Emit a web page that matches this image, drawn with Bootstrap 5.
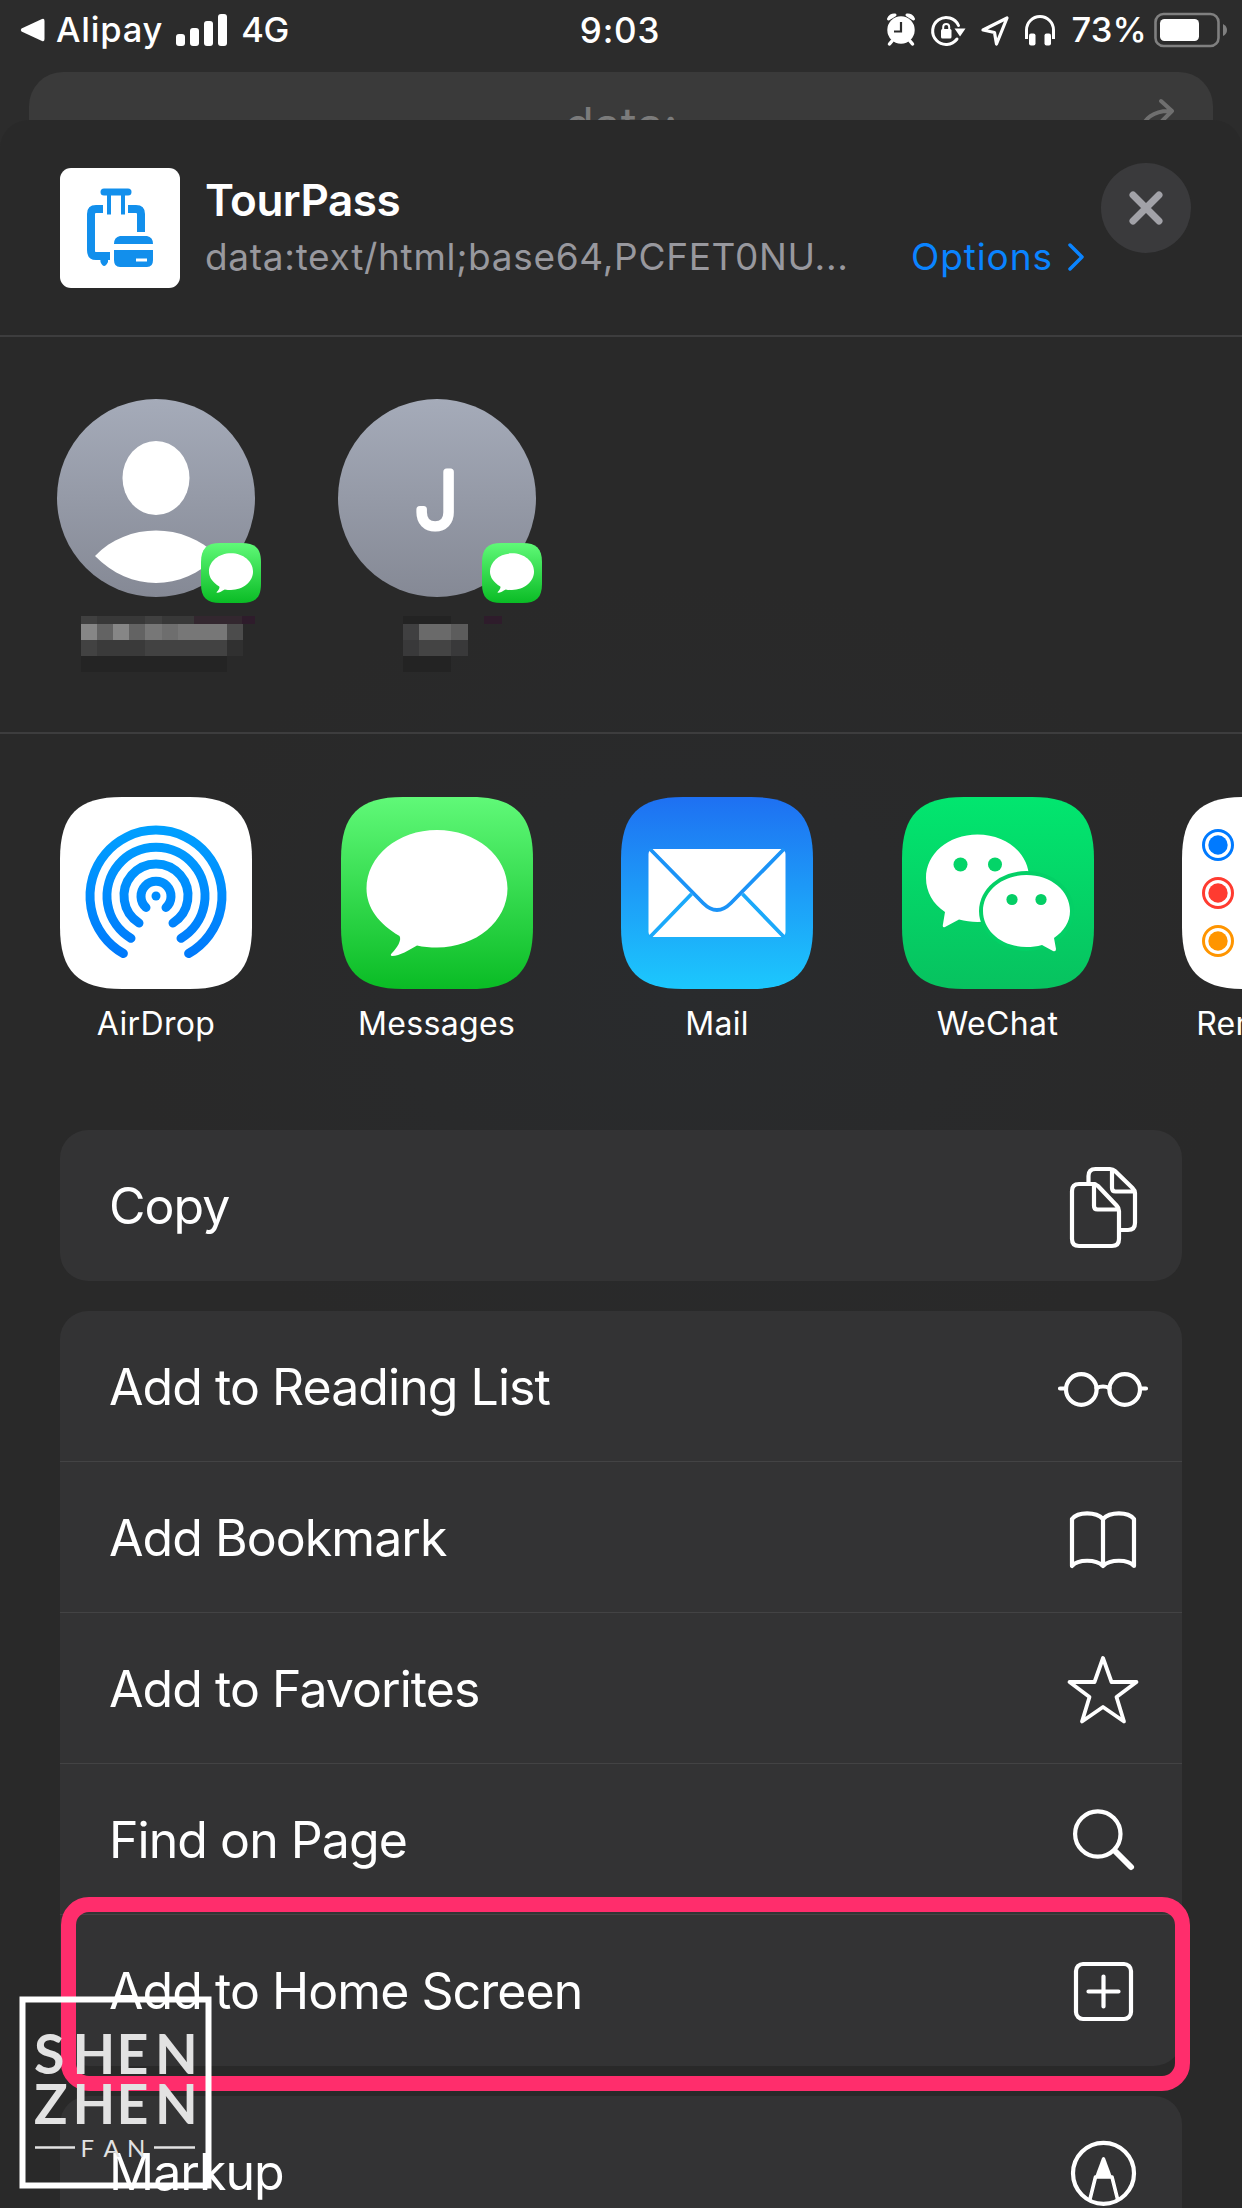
<!DOCTYPE html>
<html lang="en">
<head>
<meta charset="utf-8">
<meta name="viewport" content="width=device-width, initial-scale=1">
<title>Share sheet</title>
<link href="https://cdn.jsdelivr.net/npm/bootstrap@5.3.0/dist/css/bootstrap.min.css" rel="stylesheet">
<style>
html,body{height:2208px;overflow:hidden}
body{width:1242px;background:#2c2c2c;color:#fff;font-family:Inter,"Liberation Sans",sans-serif;position:relative}
svg{display:block;flex:none}
.statusbar{height:72px;font-size:34.5px;line-height:60px;font-weight:450;padding:0 14px 13px 20px}
.statusbar>div{flex:1 1 0}
.clock{font-size:35px;letter-spacing:.8px;margin-left:-4px;margin-right:4px}
.carrier{letter-spacing:.8px;margin-left:11px}
.bars{margin-left:13px}
.fourg{margin-left:13px;letter-spacing:-.4px}
.pct{margin-left:11px;letter-spacing:.2px}
.batt{margin-left:7px}
.behind{margin:0 29px;height:48px;background:#3a3a3a;border-radius:34px 34px 0 0;overflow:hidden}
.behind .addr{font-size:48px;line-height:58px;color:#7b7b7b;padding-top:24px}
.sheet{height:2088px;background:radial-gradient(ellipse 560px 420px at 680px 880px,#292b2d,#292929);border-radius:28px 28px 0 0;overflow:hidden}
.head{height:217px;padding:48px 51px 0 60px;border-bottom:2px solid #3d3d3e}
.favicon{width:120px;height:120px;background:#fff;border-radius:11px}
.titles{margin-left:25px;padding-top:4px}
.site{font-size:44px;line-height:56px;font-weight:600;letter-spacing:-.5px}
.addrline{font-size:37px;line-height:58px;color:#98989e}
.url{width:706px;letter-spacing:.7px}
.opt{color:#0a84ff}
.optname{letter-spacing:.9px}
.chev{margin-left:14px}
.closebtn{width:90px;height:90px;background:#3a3a3c;margin-top:-5px}
.people{height:397px;padding:62px 57px 0;gap:83px;border-bottom:2px solid #3d3d3e}
.avatar{width:198px;height:198px;border-radius:50%;background:linear-gradient(#a5abb9,#858995);position:relative}
.avatar .mini{position:absolute;left:144px;top:144px}
.apps{height:396px;padding:63px 0 0 15.8px}
.app{width:280.5px;flex:none}
.appname{font-size:32px;line-height:40px;margin-top:15px;letter-spacing:.35px}
.group{margin:0 60px 30px;background:#333334;border-radius:28px;overflow:hidden}
.entry{height:151px;padding:0 31px 0 49px;font-size:50px;letter-spacing:-.95px;border-bottom:1.5px solid #434344}
.entry>span{padding-top:2px}
.entry:last-child{border-bottom:0}
.ico{fill:none;stroke:#fff;stroke-width:4.2;stroke-linecap:round;stroke-linejoin:round}
.highlight{position:absolute;left:61px;top:1897px;width:1129px;height:194px;border:15px solid #ff2d6c;border-radius:28px}
.stamp{position:absolute;left:19px;top:1996px}
</style>
</head>
<body>
<svg width="0" height="0" class="position-absolute">
  <defs>
    <linearGradient id="green" x1="0" y1="0" x2="0" y2="1"><stop offset="0" stop-color="#60f978"/><stop offset="1" stop-color="#0abc25"/></linearGradient>
    <linearGradient id="blue" x1="0" y1="0" x2="0" y2="1"><stop offset="0" stop-color="#1e70f2"/><stop offset="1" stop-color="#1cc8fd"/></linearGradient>
    <linearGradient id="wx" x1="0" y1="0" x2="0" y2="1"><stop offset="0" stop-color="#02e66f"/><stop offset="1" stop-color="#07c25f"/></linearGradient>
    <linearGradient id="drop" gradientUnits="userSpaceOnUse" x1="0" y1="28" x2="0" y2="162"><stop offset="0" stop-color="#00a0ff"/><stop offset="1" stop-color="#0078fb"/></linearGradient>
    <path id="tile" d="M62 0H130C174 0 192 18 192 62V130C192 174 174 192 130 192H62C18 192 0 174 0 130V62C0 18 18 0 62 0Z"/>
    <g id="msg"><use href="#tile" fill="url(#green)"/><path fill="#fff" d="M96 33C135 33 166.500 59 166.500 91.500C166.500 124 135 150.500 96 150.500C89 150.500 82 150 76 148.500C68 153 59 159 51 159C49 158.500 50 157 51 156C56 151 61 143 58.500 139C38 127 25.500 111 25.500 91.500C25.500 59 57 33 96 33Z"/></g>
  </defs>
</svg>

<div class="statusbar d-flex align-items-center">
  <div class="d-flex align-items-center">
    <svg width="25" height="26" viewBox="0 0 25 26"><path fill="#fff" d="M22 2Q24.500 1 24.500 4V22Q24.500 25 22 24L1.500 14.500Q0 13 1.500 11.500Z"/></svg>
    <span class="carrier">Alipay</span>
    <svg class="bars" width="52" height="34" viewBox="0 0 52 34" fill="#fff"><rect x="0" y="21" width="9" height="12" rx="3"/><rect x="14" y="15" width="9" height="18" rx="3"/><rect x="28" y="8" width="9" height="25" rx="3"/><rect x="42" y="1" width="9" height="32" rx="3"/></svg>
    <span class="fourg">4G</span>
  </div>
  <div class="clock text-center">9:03</div>
  <div class="d-flex align-items-center justify-content-end">
    <svg width="176" height="40" viewBox="0 0 176 40" fill="none" stroke="#fff">
      <g fill="#fff" stroke="none"><circle cx="17" cy="20" r="13.700"/><path d="M4.500 9A6 6 0 0 1 11 5ZM29.500 9A6 6 0 0 0 23 5Z" stroke="#fff" stroke-width="3" stroke-linejoin="round"/></g><path stroke-width="3.500" stroke-linecap="round" d="M8 31L5.500 34M26 31L28.500 34"/><path stroke="#2c2c2c" stroke-width="2.200" d="M17 12V21.500H10"/>
      <path stroke-width="3" stroke-linecap="round" d="M74.500 15.500A13.500 13.500 0 1 0 73 29"/><path fill="#fff" stroke="none" d="M70.500 18.500H81.500L76 26.500Z"/><rect x="57" y="19" width="10.500" height="9.500" rx="1.500" fill="#fff" stroke="none"/><path stroke-width="2" d="M59.200 20V17A3 3 0 0 1 65.200 17V20"/>
      <path stroke-width="3.200" stroke-linejoin="round" d="M99 20L123 8L112.500 34L110.500 22.500Z"/>
      <path stroke-width="3" d="M142.500 29V20A13.500 13.500 0 0 1 169.500 20V29"/><rect x="145" y="23.500" width="6.500" height="12" rx="2" fill="#fff" stroke="none"/><rect x="160.500" y="23.500" width="6.500" height="12" rx="2" fill="#fff" stroke="none"/>
    </svg>
    <span class="pct">73%</span>
    <svg class="batt" width="74" height="36" viewBox="0 0 74 36"><rect x="1.500" y="2" width="63" height="32" rx="8" fill="none" stroke="#808080" stroke-width="2.600"/><rect x="6" y="7" width="39" height="22" rx="4.500" fill="#fff"/><path fill="#808080" d="M69 12Q73 14 73 18T69 24Z"/></svg>
  </div>
</div>

<div class="behind position-relative">
  <div class="addr text-center">data:</div>
  <svg class="position-absolute end-0 top-0 me-4" width="60" height="60" viewBox="0 0 60 60" fill="none" stroke="#6f6f6f" stroke-width="4" stroke-linecap="round" stroke-linejoin="round"><path d="M12 62C13 46 26 38 42 39M32 29L43 39L32 50"/></svg>
</div>

<main class="sheet">
  <header class="head d-flex align-items-start">
    <div class="favicon">
      <svg width="120" height="120" viewBox="0 0 120 120" fill="none" stroke="#128fec"><path stroke-width="7" stroke-linecap="round" d="M44 24H68"/><path stroke-width="4" d="M49 25V46.500M63 25V46.500"/><path stroke-width="8" d="M43 41H36Q31 41 31 46V82Q31 88 36 88H50M68 41H76Q81 41 81 46V64"/><path fill="#128fec" stroke="none" d="M40 86H48V94Q44 102 40.500 94ZM60 68H87Q93 69 93 76H54Q54 69 60 68ZM54 82H93V92Q93 99 87 99H60Q54 99 54 92Z"/><path stroke="#fff" stroke-width="3" d="M76 92H87"/></svg>
    </div>
    <div class="titles flex-grow-1">
      <div class="site">TourPass</div>
      <div class="addrline d-flex">
        <span class="url flex-shrink-0">data:text/html;base64,PCFET0NU...</span>
        <span class="opt d-flex align-items-center"><span class="optname">Options</span>
          <svg class="chev" width="18" height="32" viewBox="0 0 18 32" fill="none" stroke="#0a84ff" stroke-width="3.500" stroke-linecap="round" stroke-linejoin="round"><path d="M3 4L15 16L3 28"/></svg></span>
      </div>
    </div>
    <div class="closebtn rounded-circle flex-shrink-0 d-flex align-items-center justify-content-center">
      <svg width="40" height="40" viewBox="0 0 40 40" stroke="#a2a2a8" stroke-width="7" stroke-linecap="round"><path d="M7 7L33 33M33 7L7 33"/></svg>
    </div>
  </header>

  <section class="people d-flex align-items-start">
    <div>
      <div class="avatar">
        <svg width="198" height="198" viewBox="0 0 198 198" fill="#fff"><ellipse cx="99" cy="79" rx="33.500" ry="37"/><path d="M38 157C70 123 128 123 160 157C125 193 73 193 38 157Z"/></svg>
        <svg class="mini" width="60" height="60" viewBox="0 0 192 192"><use href="#msg"/></svg>
      </div>
      <svg class="mt-3" width="198" height="60" viewBox="0 0 198 60" shape-rendering="crispEdges">
        <g transform="translate(23.700 3)"><path fill="#404040" d="M0 0H16V8H0ZM64 0H81V8H64Z"/><path fill="#383838" d="M16 0H64V8H16ZM81 0H113V8H81Z"/><path fill="#33272f" d="M113 0H161V8H113Z"/><path fill="#2e1c2b" d="M161 0H178V8H161Z"/>
        <path fill="#868686" d="M0 8H16V24H0ZM32 8H48V24H32Z"/><path fill="#636363" d="M16 8H32V24H16ZM48 8H64V24H48Z"/><path fill="#777" d="M64 8H146V24H64Z"/><path fill="#6e6e6e" d="M81 8H97V24H81Z"/><path fill="#4c4c4c" d="M146 8H162V24H146Z"/>
        <path fill="#424242" d="M0 24H16V40H0ZM64 24H146V40H64Z"/><path fill="#3a3a3a" d="M16 24H64V40H16Z"/><path fill="#303030" d="M146 24H162V40H146Z"/><path fill="#242424" d="M0 40H146V56H0Z"/></g>
      </svg>
    </div>
    <div>
      <div class="avatar">
        <svg width="198" height="198" viewBox="0 0 198 198"><text x="98" y="128" text-anchor="middle" font-size="76" font-weight="200" fill="#fff" stroke="#fff" stroke-width="7" stroke-linejoin="round">J</text></svg>
        <svg class="mini" width="60" height="60" viewBox="0 0 192 192"><use href="#msg"/></svg>
      </div>
      <svg class="mt-3" width="198" height="60" viewBox="0 0 198 60" shape-rendering="crispEdges">
        <g transform="translate(65 3)"><path fill="#232323" d="M0 0H48V8H0ZM0 40H48V56H0Z"/><path fill="#2e1c2b" d="M81 0H99V8H81Z"/><path fill="#404041" d="M0 8H16V24H0Z"/><path fill="#6a6a6a" d="M16 8H48V24H16Z"/><path fill="#5c5c5c" d="M48 8H65V24H48Z"/><path fill="#39393a" d="M0 24H65V40H0Z"/><path fill="#444" d="M16 24H48V40H16Z"/></g>
      </svg>
    </div>
  </section>

  <section class="apps d-flex align-items-start">
    <div class="app d-flex flex-column align-items-center">
      <svg width="192" height="192" viewBox="0 0 192 192"><use href="#tile" fill="#fff"/><g transform="translate(0 1)" fill="none" stroke="url(#drop)" stroke-width="9" stroke-linecap="round"><path d="M63.400 155.500A66 66 0 1 1 128.600 155.500M71 140.300A49 49 0 1 1 121 140.300M79 125A32 32 0 1 1 113 125M86 109.500A15 15 0 1 1 106 109.500"/></g><circle cx="96" cy="99" r="4.500" fill="#008cff"/></svg>
      <div class="appname">AirDrop</div>
    </div>
    <div class="app d-flex flex-column align-items-center">
      <svg width="192" height="192" viewBox="0 0 192 192"><use href="#msg"/></svg>
      <div class="appname">Messages</div>
    </div>
    <div class="app d-flex flex-column align-items-center">
      <svg width="192" height="192" viewBox="0 0 192 192"><use href="#tile" fill="url(#blue)"/><rect x="27.500" y="52" width="137" height="88" rx="5" fill="#fff"/><g fill="none" stroke="#1b93f7" stroke-width="3.800"><path d="M29 52L82 106Q96 120 110 106L163 52"/><path stroke="#1ba9fa" d="M29 140L70.500 97M163 140L121.500 97"/></g></svg>
      <div class="appname">Mail</div>
    </div>
    <div class="app d-flex flex-column align-items-center">
      <svg width="192" height="192" viewBox="0 0 192 192"><use href="#tile" fill="url(#wx)"/><path fill="#fff" d="M75.500 37.500C105 37.500 127 57 127 81S105 125 75.500 125C69 125 63 124 57 122.500L43 130Q40 131 41 127L43 115C31 107 24 95 24 81C24 57 46 37.500 75.500 37.500Z"/><g fill="#04d468"><circle cx="58.500" cy="67.500" r="7"/><circle cx="93" cy="67.500" r="7"/></g><ellipse cx="124.500" cy="114" rx="47.500" ry="40" fill="#04d066"/><path fill="#fff" d="M124.500 78C149 78 168 94 168 114C168 125 162 134 152 141L154 152Q154 155 151 154L140 148C135 149.500 130 150 124.500 150C100 150 81 134 81 114S100 78 124.500 78Z"/><g fill="#04ce65"><circle cx="110" cy="102.500" r="5.600"/><circle cx="139" cy="102.500" r="5.600"/></g></svg>
      <div class="appname">WeChat</div>
    </div>
    <div class="app d-flex flex-column align-items-center">
      <svg width="192" height="192" viewBox="0 0 192 192"><use href="#tile" fill="#fff"/><g fill="none" stroke-width="3"><circle cx="36" cy="48" r="14.500" stroke="#007aff"/><circle cx="36" cy="96" r="14.500" stroke="#ff3b30"/><circle cx="36" cy="144" r="14.500" stroke="#ff9500"/></g><circle cx="36" cy="48" r="9.700" fill="#007aff"/><circle cx="36" cy="96" r="9.700" fill="#ff3b30"/><circle cx="36" cy="144" r="9.700" fill="#ff9500"/></svg>
      <div class="appname">Reminders</div>
    </div>
  </section>

  <div class="group">
    <div class="entry d-flex align-items-center justify-content-between"><span>Copy</span>
      <svg class="ico" width="96" height="96" viewBox="0 0 96 96"><path d="M40 26H24Q17 26 17 33V81Q17 88 24 88H57Q64 88 64 81V53Q64 50 62 48L43 28Q41 26 38 26M39 28V48Q39 51.500 42.500 51.500H63M33.500 25V18Q33.500 11 40.500 11H55Q58 11 60 13L77.500 30Q80 32.500 80 35V65Q80 72 73 72H66M57 13V30Q57 33.500 60.500 33.500H79"/></svg></div>
  </div>
  <div class="group">
    <div class="entry d-flex align-items-center justify-content-between"><span>Add to Reading List</span>
      <svg class="ico" width="96" height="96" viewBox="0 0 96 96"><circle cx="26.300" cy="51.500" r="15.300"/><circle cx="69.700" cy="51.500" r="15.300"/><path d="M5 50.500H10M86 50.500H91M41.500 50Q48 47 54.500 50"/></svg></div>
    <div class="entry d-flex align-items-center justify-content-between"><span>Add Bookmark</span>
      <svg class="ico" width="96" height="96" viewBox="0 0 96 96"><path d="M17 77V30C23 22.500 41 22.500 48 30C55 22.500 73 22.500 79 30V77C73 70 55 70 48 77C41 70 23 70 17 77ZM48 30V77"/></svg></div>
    <div class="entry d-flex align-items-center justify-content-between"><span>Add to Favorites</span>
      <svg class="ico" width="96" height="96" viewBox="0 0 96 96"><path stroke-width="3.800" d="M48 18L56.500 42H81.500L61.500 57L69 81.500L48 67L27 81.500L34.500 57L14.500 42H39.500Z"/></svg></div>
    <div class="entry d-flex align-items-center justify-content-between"><span>Find on Page</span>
      <svg class="ico" width="96" height="96" viewBox="0 0 96 96"><circle cx="42.800" cy="43" r="22.700"/><path stroke-width="6" d="M60 60L76 76"/></svg></div>
    <div class="entry d-flex align-items-center justify-content-between"><span>Add to Home Screen</span>
      <svg class="ico" width="96" height="96" viewBox="0 0 96 96"><rect x="21" y="21" width="55" height="55" rx="7"/><path d="M33.500 48.500H63.500M48.500 33.500V63.500"/></svg></div>
  </div>
  <div class="group">
    <div class="entry d-flex align-items-center justify-content-between"><span>Markup</span>
      <svg class="ico" width="96" height="96" viewBox="0 0 96 96"><g transform="translate(0 -1)"><circle cx="48.500" cy="50.300" r="30.500"/><path stroke-width="3.600" d="M35 76L40.500 54H57L62.500 76"/><path stroke="none" fill="#fff" d="M47 35Q48.500 33 50 35L57 54H40Z"/></g></svg></div>
  </div>
</main>

<div class="highlight"></div>
<svg class="stamp" width="194" height="194" viewBox="0 0 194 194">
  <rect x="3.500" y="3.500" width="186" height="186" fill="none" stroke="#fff" stroke-width="6"/>
  <g fill="#e2e2e2" font-family="Lato, sans-serif" font-weight="700" font-size="55.500"><text x="15 53.500 97.500 136" y="78">SHEN</text><text x="15 53.500 97.500 136" y="128">ZHEN</text></g>
  <text x="61.500 84.500 108" y="160.500" fill="#e2e2e2" font-family="Lato, sans-serif" font-size="24">FAN</text>
  <path stroke="#e2e2e2" stroke-width="2.500" d="M16 151.500H56M135 151.500H176"/>
</svg>
<script src="https://cdn.jsdelivr.net/npm/bootstrap@5.3.0/dist/js/bootstrap.bundle.min.js"></script>
</body>
</html>
